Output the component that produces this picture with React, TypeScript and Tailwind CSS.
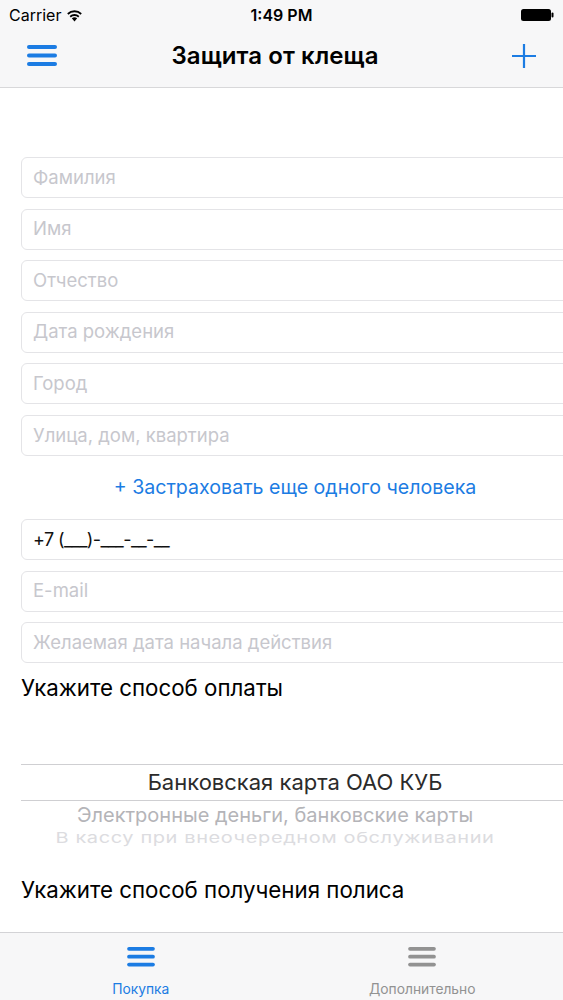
import React from "react";

const font = { fontFamily: "Inter, 'Noto Sans', sans-serif" };

function Hamburger({ color }: { color: string }) {
  return (
    <svg width="30" height="22" viewBox="0 0 30 22">
      <rect x="0" y="0" width="30" height="4" rx="2" fill={color} />
      <rect x="0" y="8.5" width="30" height="4" rx="2" fill={color} />
      <rect x="0" y="17" width="30" height="4" rx="2" fill={color} />
    </svg>
  );
}

function Field({ text, filled }: { text: string; filled?: boolean }) {
  return (
    <div className="h-[41px] w-[548px] shrink-0 rounded-[6px] border border-[#e4e4e7] bg-white flex items-center pl-[11px]">
      <span className={filled ? "text-[18px] text-[#111] tracking-[-0.6px]" : "text-[18.5px] text-[#c7c7cd]"}>{text}</span>
    </div>
  );
}

export default function App() {
  const first = ["Фамилия", "Имя", "Отчество", "Дата рождения", "Город", "Улица, дом, квартира"];

  return (
    <div className="h-[1000px] w-[563px] flex flex-col bg-white overflow-hidden" style={font}>
      {/* status bar */}
      <div className="h-[30px] bg-[#f7f7f8] grid grid-cols-3 items-center px-[9px]">
        <div className="flex items-center gap-[5px] text-[16px] text-black">
          <span>Carrier</span>
          <svg width="17" height="13" viewBox="0 0 17 13">
            <path d="M8.5 12.5 L5.8 9.3 A4.2 4.2 0 0 1 11.2 9.3 Z" fill="#000" />
            <path d="M3.6 7 A7.3 7.3 0 0 1 13.4 7 L12.2 8.4 A5.4 5.4 0 0 0 4.8 8.4 Z" fill="#000" />
            <path d="M1.2 4.2 A10.8 10.8 0 0 1 15.8 4.2 L14.6 5.7 A8.8 8.8 0 0 0 2.4 5.7 Z" fill="#000" />
          </svg>
        </div>
        <div className="text-center text-[16px] font-semibold text-black">1:49 PM</div>
        <div className="flex justify-end">
          <svg width="33" height="12" viewBox="0 0 33 12">
            <rect x="0" y="0" width="30" height="12" rx="2.5" fill="#000" />
            <rect x="30.5" y="3.5" width="2" height="5" rx="1" fill="#000" />
          </svg>
        </div>
      </div>

      {/* nav bar */}
      <div className="h-[58px] bg-[#f7f7f8] border-b border-[#d8d8da] flex items-center px-[27px] pb-[6px]">
        <Hamburger color="#1c7ce3" />
        <div className="flex-1 text-center text-[24px] font-semibold text-black tracking-[0.1px] pr-[18px]">Защита от клеща</div>
        <svg width="26" height="26" viewBox="0 0 26 26" className="mr-[-1px]">
          <path d="M13 1 V25 M1 13 H25" stroke="#1c7ce3" strokeWidth="2.2" />
        </svg>
      </div>

      {/* content */}
      <div className="flex-1 flex flex-col pl-[21px] pt-[69px] overflow-hidden">
        <div className="flex flex-col gap-[10.6px]">
          {first.map((t) => (
            <Field key={t} text={t} />
          ))}
        </div>
        <div className="h-[63px] w-[548px] flex items-center justify-center text-[19.6px] text-[#1c7ce3]">
          + Застраховать еще одного человека
        </div>
        <div className="flex flex-col gap-[10.6px]">
          <Field text="+7 (___)-___-__-__" filled />
          <Field text="E-mail" />
          <Field text="Желаемая дата начала действия" />
        </div>
        <div className="mt-[12px] h-[26px] flex items-center text-[22.3px] text-black">Укажите способ оплаты</div>

        {/* picker */}
        <div className="mt-[63px] w-[548px] h-[83px] overflow-hidden flex flex-col">
          <div className="h-[37px] shrink-0 border-y border-[#cfcfd2] flex items-center justify-center text-[22px] text-[#2b2b2b]">
            Банковская карта ОАО КУБ
          </div>
          <div className="h-[28px] shrink-0 flex items-center justify-center pr-[40px] text-[20px] text-[#b4b4b8]">
            Электронные деньги, банковские карты
          </div>
          <div className="h-[18px] shrink-0 flex items-center justify-center pr-[40px] text-[20px] text-[#dcdce0] tracking-[0.6px] scale-y-[0.75]">
            В кассу при внеочередном обслуживании
          </div>
        </div>

        <div className="mt-[30px] h-[26px] flex items-center text-[22.3px] text-black">Укажите способ получения полиса</div>
      </div>

      {/* tab bar */}
      <div className="h-[68px] shrink-0 bg-[#f7f7f8] border-t border-[#d3d3d6] flex">
        <div className="flex-1 flex flex-col items-center pt-[14px]">
          <Hamburger color="#1c7ce3" />
          <span className="mt-[12px] text-[13.8px] text-[#1c7ce3]">Покупка</span>
        </div>
        <div className="flex-1 flex flex-col items-center pt-[14px]">
          <Hamburger color="#929292" />
          <span className="mt-[12px] text-[13.8px] text-[#929292]">Дополнительно</span>
        </div>
      </div>
    </div>
  );
}
